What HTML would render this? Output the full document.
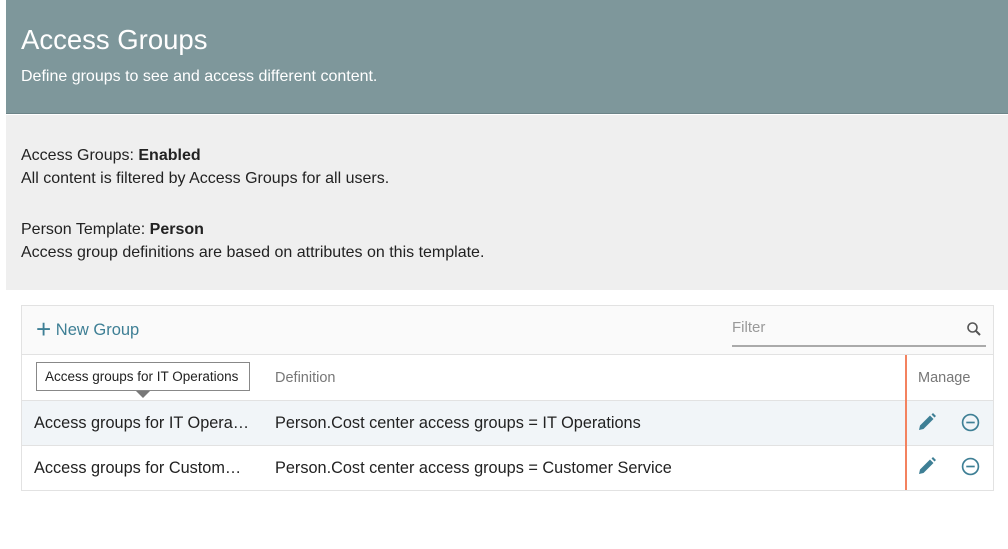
<!DOCTYPE html>
<html><head><style>
*{margin:0;padding:0;box-sizing:border-box}
body{width:1008px;height:549px;background:#fff;font-family:"Liberation Sans",sans-serif;position:relative;overflow:hidden}
.hdr{position:absolute;left:6px;top:0;width:1002px;height:114px;background:#7e979b;color:#fff;border-bottom:1px solid #6d8488}
.hdr h1{position:absolute;left:15px;top:24px;font-size:27.5px;font-weight:normal}
.hdr p{position:absolute;left:15px;top:68px;font-size:16px}
.info{position:absolute;left:6px;top:115px;width:1002px;height:175px;background:#efefef;color:#222;font-size:16px;line-height:24px}
.info div{position:absolute;left:15px}
.box{position:absolute;left:21px;top:305px;width:973px;height:186px;border:1px solid #e2e2e2}
.tb{position:absolute;left:0;top:0;width:971px;height:49px;background:#fafafa;border-bottom:1px solid #e2e2e2}
.ng{position:absolute;left:14px;top:5px;color:#3e7f95;font-size:16.5px}
.filter{position:absolute;left:710px;top:13px;width:254px;height:28px;border-bottom:2px solid #aaa;color:#999;font-size:15px}
.row{position:absolute;left:0;width:971px;border-bottom:1px solid #e2e2e2;font-size:16.3px;color:#222}
.c1{position:absolute;left:12px}.c2{position:absolute;left:253px}
.vl{position:absolute;left:883px;top:49px;width:1.5px;height:135px;background:#f3825f;z-index:5}
</style></head><body>
<div class="hdr"><h1>Access Groups</h1><p>Define groups to see and access different content.</p></div>
<div class="info">
<div style="top:29px">Access Groups: <b>Enabled</b></div>
<div style="top:52px">All content is filtered by Access Groups for all users.</div>
<div style="top:103px">Person Template: <b>Person</b></div>
<div style="top:126px">Access group definitions are based on attributes on this template.</div>
</div>
<div class="box">
<div class="tb"><div class="ng"><span style="font-size:26px;position:relative;top:3px;font-weight:300">+</span> New Group</div>
<div class="filter">Filter<svg style="position:absolute;right:4px;top:2px" width="16" height="16" viewBox="0 0 16 16"><circle cx="6.5" cy="6.5" r="4.5" fill="none" stroke="#555" stroke-width="1.6"/><path d="M10 10l4 4" stroke="#555" stroke-width="2"/></svg></div></div>
<div class="row" style="top:49px;height:46px;background:#fff;font-size:14.5px;color:#777">
<div class="c2" style="top:15px">Definition</div>
<div style="position:absolute;left:896px;top:15px">Manage</div>
<div style="position:absolute;left:14px;top:7px;width:214px;height:29px;border:1px solid #888;background:#fff;color:#222;font-size:13.5px;padding:6px 0 0 8px">Access groups for IT Operations</div>
<div style="position:absolute;left:114px;top:36px;width:0;height:0;border-left:7px solid transparent;border-right:7px solid transparent;border-top:7px solid #777"></div>
</div>
<div class="row" style="top:95px;height:45px;background:#f1f5f8">
<div class="c1" style="top:13px">Access groups for IT Opera…</div>
<div class="c2" style="top:13px">Person.Cost center access groups = IT Operations</div>
</div>
<div class="row" style="top:140px;height:44px;background:#fff;border-bottom:none">
<div class="c1" style="top:13px">Access groups for Custom…</div>
<div class="c2" style="top:13px">Person.Cost center access groups = Customer Service</div>
</div>
<div class="vl"></div>
<svg style="position:absolute;left:895px;top:106px" width="20" height="20" viewBox="0 0 20 20"><path d="M2 18l1-4.5 10-10 3.5 3.5-10 10z M14.5 2.5l1.5-1.5 3 3-1.5 1.5z" fill="#3e7f95"/></svg>
<svg style="position:absolute;left:939px;top:107px" width="19" height="19" viewBox="0 0 18 18"><circle cx="9" cy="9" r="7.5" fill="none" stroke="#3e7f95" stroke-width="1.6"/><path d="M5 9h8" stroke="#3e7f95" stroke-width="1.6"/></svg>
<svg style="position:absolute;left:895px;top:150px" width="20" height="20" viewBox="0 0 20 20"><path d="M2 18l1-4.5 10-10 3.5 3.5-10 10z M14.5 2.5l1.5-1.5 3 3-1.5 1.5z" fill="#3e7f95"/></svg>
<svg style="position:absolute;left:939px;top:151px" width="19" height="19" viewBox="0 0 18 18"><circle cx="9" cy="9" r="7.5" fill="none" stroke="#3e7f95" stroke-width="1.6"/><path d="M5 9h8" stroke="#3e7f95" stroke-width="1.6"/></svg>
</div>
</body></html>
